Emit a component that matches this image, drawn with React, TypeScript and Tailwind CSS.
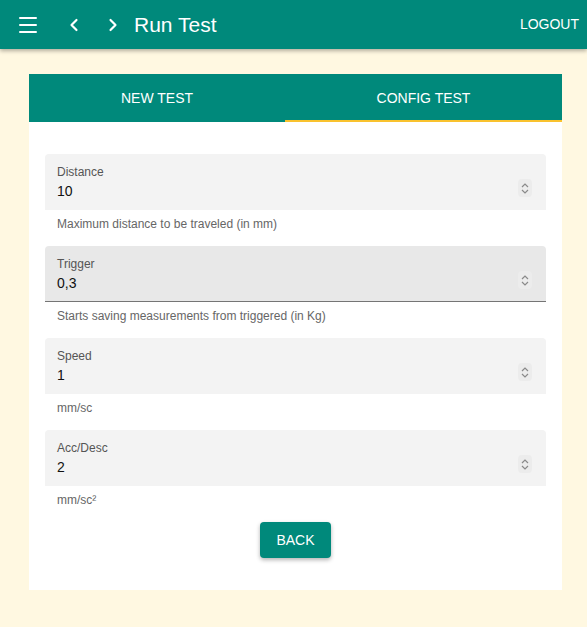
import { ChevronLeft, ChevronRight, Menu } from "lucide-react";

const fields = [
  { label: "Distance", value: "10", hint: "Maximum distance to be traveled (in mm)", active: false },
  { label: "Trigger", value: "0,3", hint: "Starts saving measurements from triggered (in Kg)", active: true },
  { label: "Speed", value: "1", hint: "mm/sc", active: false },
  { label: "Acc/Desc", value: "2", hint: "mm/sc²", active: false },
];

function Spinner() {
  return (
    <div className="flex h-[18px] w-[14px] items-center justify-center rounded-sm bg-[#ececec]">
      <svg width="8" height="13" viewBox="0 0 8 13" fill="none" stroke="#8a8a8a" strokeWidth="1.2">
        <path d="M1 5 L4 2 L7 5" />
        <path d="M1 8 L4 11 L7 8" />
      </svg>
    </div>
  );
}

export default function App() {
  return (
    <div
      className="min-h-[627px] bg-[#fff8e1]"
      style={{ fontFamily: '"Liberation Sans", Arial, sans-serif' }}
    >
      <header className="relative z-10 flex h-[49px] items-center bg-[#00897b] pl-[16px] pr-[8px] text-white shadow-[0_2px_4px_rgba(0,0,0,0.3)]">
        <Menu size={24} strokeWidth={2} />
        <ChevronLeft size={20} strokeWidth={2.6} className="ml-[24px]" />
        <ChevronRight size={20} strokeWidth={2.6} className="ml-[19px]" />
        <h1 className="ml-[11px] text-[21px] leading-none">Run Test</h1>
        <span className="ml-auto text-[14px]">LOGOUT</span>
      </header>

      <div className="px-[29px] pt-[25px] pb-[37px]">
        <div className="w-[533px] bg-white">
          <div className="flex h-[48px] bg-[#00897b] text-[14px] text-white">
            <div className="flex w-[256px] items-center justify-center">NEW TEST</div>
            <div className="relative flex flex-1 items-center justify-center">
              CONFIG TEST
              <div className="absolute bottom-0 left-0 right-0 h-[2px] bg-[#f9c22e]" />
            </div>
          </div>

          <div className="flex flex-col px-[16px] pt-[32px] pb-[32px]">
            {fields.map((f) => (
              <div key={f.label} className="h-[92px]">
                <div
                  className={
                    f.active
                      ? "flex h-[56px] items-start justify-between rounded-t bg-[#e8e8e8] border-b border-[#757575] pl-[12px] pr-[14px]"
                      : "flex h-[56px] items-start justify-between rounded-t bg-[#f3f3f3] pl-[12px] pr-[14px]"
                  }
                >
                  <div className="flex flex-col pt-[11px]">
                    <span className="text-[12px] leading-[14px] text-[#555]">{f.label}</span>
                    <span className="mt-[3px] text-[14px] leading-[18px] text-[#111]">{f.value}</span>
                  </div>
                  <div className="pt-[25px]">
                    <Spinner />
                  </div>
                </div>
                <div className="pl-[12px] pt-[7px] text-[12px] leading-[14px] text-[#666]">{f.hint}</div>
              </div>
            ))}
            <div className="flex justify-center">
              <button className="h-[36px] w-[71px] rounded bg-[#00897b] text-[14px] text-white shadow-[0_2px_4px_rgba(0,0,0,0.3)]">
                BACK
              </button>
            </div>
          </div>
        </div>
      </div>
    </div>
  );
}
